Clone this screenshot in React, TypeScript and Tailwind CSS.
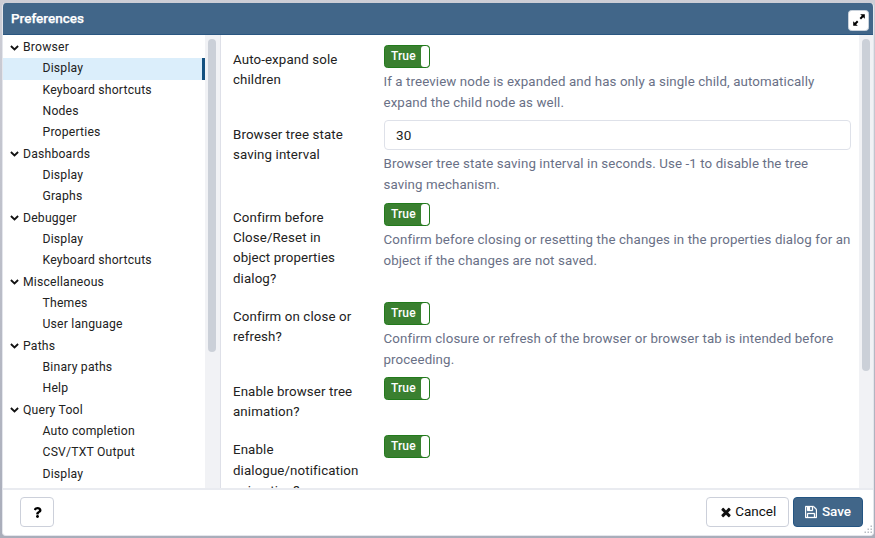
import { FaQuestion } from 'react-icons/fa';

type Group = { title: string; items: string[] };
type Setting = { label: string[]; height: string; value?: string; help?: string[] };

const groups: Group[] = [
  { title: 'Browser', items: ['Display', 'Keyboard shortcuts', 'Nodes', 'Properties'] },
  { title: 'Dashboards', items: ['Display', 'Graphs'] },
  { title: 'Debugger', items: ['Display', 'Keyboard shortcuts'] },
  { title: 'Miscellaneous', items: ['Themes', 'User language'] },
  { title: 'Paths', items: ['Binary paths', 'Help'] },
  { title: 'Query Tool', items: ['Auto completion', 'CSV/TXT Output', 'Display'] },
];

const settings: Setting[] = [
  {
    label: ['Auto-expand sole', 'children'],
    height: 'h-[75.5px]',
    help: ['If a treeview node is expanded and has only a single child, automatically', 'expand the child node as well.'],
  },
  {
    label: ['Browser tree state', 'saving interval'],
    height: 'h-[82.5px]',
    value: '30',
    help: ['Browser tree state saving interval in seconds. Use -1 to disable the tree', 'saving mechanism.'],
  },
  {
    label: ['Confirm before', 'Close/Reset in', 'object properties', 'dialog?'],
    height: 'h-[99px]',
    help: ['Confirm before closing or resetting the changes in the properties dialog for an', 'object if the changes are not saved.'],
  },
  {
    label: ['Confirm on close or', 'refresh?'],
    height: 'h-[75.5px]',
    help: ['Confirm closure or refresh of the browser or browser tab is intended before', 'proceeding.'],
  },
  { label: ['Enable browser tree', 'animation?'], height: 'h-[58.3px]' },
  { label: ['Enable', 'dialogue/notification', 'animation?'], height: 'h-[78px]' },
];

function Chevron() {
  return (
    <svg className="h-[6px] w-[9px] shrink-0" viewBox="0 0 9 6" fill="none">
      <path d="M0.9 1 4.5 4.5 8.1 1" stroke="#111" strokeWidth="1.8" />
    </svg>
  );
}

function ExpandIcon() {
  return (
    <svg className="h-[12px] w-[12px]" viewBox="0 0 12 12" fill="#000">
      <path d="M7.2.2H11.8V4.8L10.2 3.2 8 5.4 6.6 4 8.8 1.8ZM.2 7.200 1.800 8.800 4 6.600 5.400 8 3.200 10.200 4.800 11.800H.2Z" />
    </svg>
  );
}

function CloseIcon() {
  return (
    <svg className="h-[14px] w-[14px]" viewBox="0 0 1792 1792" fill="#111">
      <path d="M1490 1322q0 40-28 68l-136 136q-28 28-68 28t-68-28l-294-294-294 294q-28 28-68 28t-68-28l-136-136q-28-28-28-68t28-68l294-294-294-294q-28-28-28-68t28-68l136-136q28-28 68-28t68 28l294 294 294-294q28-28 68-28t68 28l136 136q28 28 28 68t-28 68l-294 294 294 294q28 28 28 68z" />
    </svg>
  );
}

function SaveIcon() {
  return (
    <svg className="h-[14px] w-[12px]" viewBox="0 0 1536 1792" fill="#fff" stroke="#fff" strokeWidth="40">
      <path d="M384 1536h768v-384H384v384zm896 0h128V640q0-14-10-38.500t-20-34.500l-281-281q-10-10-34-20t-39-10v416q0 40-28 68t-68 28H352q-40 0-68-28t-28-68V256H128v1280h128v-416q0-40 28-68t68-28h832q40 0 68 28t28 68v416zM896 608V288q0-13-9.500-22.500T864 256H672q-13 0-22.500 9.500T640 288v320q0 13 9.500 22.500T672 640h192q13 0 22.500-9.500T896 608zm640 32v928q0 40-28 68t-68 28H96q-40 0-68-28t-28-68V224q0-40 28-68t68-28h928q40 0 88 20t76 48l280 280q28 28 48 76t20 88z" />
    </svg>
  );
}

function Toggle() {
  return (
    <div className="mt-[0.5px] flex h-[23px] w-[46.500px] overflow-hidden rounded-[3.500px] border border-[#227a1c] bg-[#3a8030]">
      <span className="w-[36px] pl-[6.500px] text-[12px] leading-[21px] font-medium text-white">True</span>
      <span className="flex-1 rounded-[3px] bg-white" />
    </div>
  );
}

function SettingRow({ label, height, value, help }: Setting) {
  return (
    <div className={`flex shrink-0 ${height}`}>
      <div className="w-[150.500px] shrink-0 pt-[5.500px] leading-[20.400px] text-[#222]">
        {label.map((line) => (
          <div key={line} className="whitespace-nowrap">{line}</div>
        ))}
      </div>
      <div className="w-[467.500px]">
        {value ? (
          <div className="mt-[0.5px] h-[30px] rounded-[4px] border border-[#dee1e9] pl-[11.500px] text-[13.500px] leading-[29px] text-[#222]">{value}</div>
        ) : (
          <Toggle />
        )}
        <div className={value ? 'pt-[4.100px] leading-[20.400px] text-[#697086]' : 'pt-[4.600px] leading-[20.400px] text-[#697086]'}>
          {help?.map((line) => (
            <div key={line} className="whitespace-nowrap">{line}</div>
          ))}
        </div>
      </div>
    </div>
  );
}

export default function App() {
  return (
    <div className="h-[538px] w-[875px] overflow-hidden bg-gradient-to-b from-[#cdced6] to-[#a9adba] pt-[3px] pl-[2px] font-['Roboto',sans-serif]">
      <div className="flex h-[533px] w-[872px] flex-col overflow-hidden rounded-[4px] border-x border-b border-[#e4e6ec] bg-white">
        <header className="-mx-px flex h-[32px] shrink-0 items-center justify-between border-b border-[#2a5680] bg-[#416689] pr-[5px] pl-[9px]">
          <h1 className="text-[13.500px] font-medium text-white [-webkit-text-stroke:0.25px_white]">Preferences</h1>
          <button className="mt-[3px] flex h-[21px] w-[21px] items-center justify-center rounded-[3.500px] border border-[#c9d2dc] bg-white">
            <ExpandIcon />
          </button>
        </header>

        <div className="flex h-[455px] shrink-0 overflow-hidden border-b-2 border-[#e9ebf0]">
          <aside className="flex w-[218px] shrink-0 border-r border-[#dee0e8]">
            <nav className="w-[202px] pt-[2.100px] text-[12.200px] leading-[21.330px] tracking-[0.2px] text-[#222]">
              {groups.map((group, groupIndex) => (
                <div key={group.title}>
                  <div className="flex h-[21.330px] items-center gap-[4.500px] pl-[6.500px]">
                    <Chevron />
                    <span>{group.title}</span>
                  </div>
                  {group.items.map((item, itemIndex) => (
                    <div
                      key={item}
                      className={
                        groupIndex === 0 && itemIndex === 0
                          ? 'h-[21.330px] border-r-[3px] border-[#14507f] bg-[#dbeefb] pl-[39.500px]'
                          : 'h-[21.330px] pl-[39.500px]'
                      }
                    >
                      {item}
                    </div>
                  ))}
                </div>
              ))}
            </nav>
            <div className="flex-1 bg-[#f1f2f5] pt-[4px] pl-[3px]">
              <div className="h-[313px] w-[8px] rounded-full bg-[#cbd0d8]" />
            </div>
          </aside>

          <main className="flex min-w-0 flex-1 flex-col pt-[9px] pl-[12px] text-[13.300px] tracking-[0.110px]">
            {settings.map((setting) => (
              <SettingRow key={setting.label.join(' ')} {...setting} />
            ))}
          </main>
          <div className="w-[14px] shrink-0 bg-[#f1f2f5] pt-[4px] pl-[3px]">
            <div className="h-[332px] w-[8px] rounded-full bg-[#cbd0d8]" />
          </div>
        </div>

        <footer className="relative flex flex-1 items-start pt-[7px] pl-[17px] text-[13.500px]">
          <button className="flex h-[30px] w-[34px] items-center justify-center rounded-[4px] border border-[#ccd0da]">
            <FaQuestion className="h-[11px] w-[11px] text-black" />
          </button>
          <button className="ml-auto flex h-[30px] w-[83px] items-center justify-center gap-[2.500px] rounded-[4px] border border-[#ccd0da] pb-px text-[#111]">
            <CloseIcon />
            Cancel
          </button>
          <button className="mr-[10px] ml-[4px] flex h-[30px] w-[70px] items-center justify-center gap-[5px] rounded-[4px] border border-[#245583] bg-[#416689] pb-px font-medium text-white">
            <SaveIcon />
            Save
          </button>
          <svg className="absolute right-0 bottom-[1px] h-[9px] w-[9px]" viewBox="0 0 9 9" fill="#b9bcc4">
            <path d="M6.500.5h1.500v1.500h-1.500zM6.500 3.500h1.500v1.500h-1.500zM3.500 3.500h1.500v1.500h-1.500zM.5 6.500h1.500v1.500h-1.500zM3.500 6.500h1.500v1.500h-1.500zM6.500 6.500h1.500v1.500h-1.500z" />
          </svg>
        </footer>
      </div>
    </div>
  );
}
